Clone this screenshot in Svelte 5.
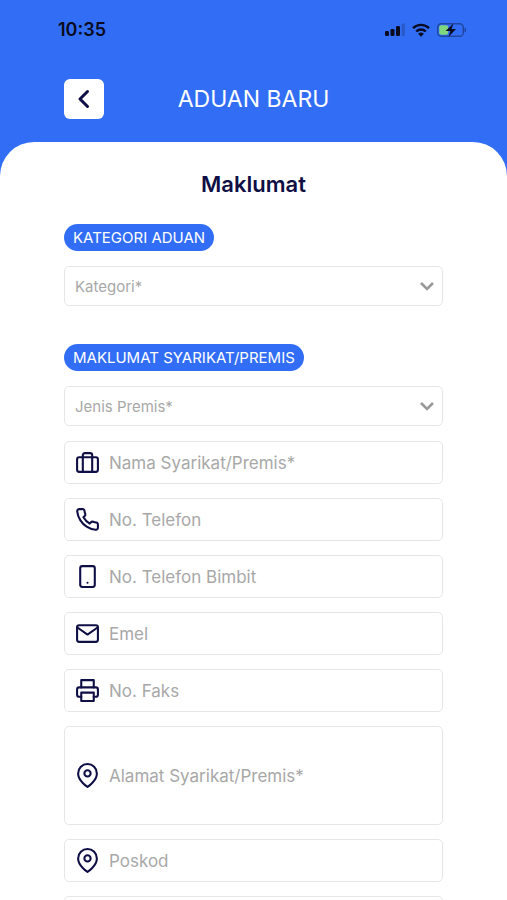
<script lang="ts">
  type Field = {
    id: string;
    icon: keyof typeof icons;
    placeholder: string;
    type?: string;
    multiline?: boolean;
  };

  // 24x24 stroke icons
  const icons = {
    briefcase: ['M4 7h16a2 2 0 0 1 2 2v10a2 2 0 0 1-2 2H4a2 2 0 0 1-2-2V9a2 2 0 0 1 2-2z', 'M16.500 21V5a2 2 0 0 0-2-2h-5a2 2 0 0 0-2 2v16'],
    phone: [
      'M22 16.92v3a2 2 0 0 1-2.18 2 19.79 19.79 0 0 1-8.63-3.07 19.5 19.5 0 0 1-6-6 19.79 19.79 0 0 1-3.07-8.67A2 2 0 0 1 4.11 2h3a2 2 0 0 1 2 1.72 12.84 12.84 0 0 0 .7 2.81 2 2 0 0 1-.45 2.11L8.09 9.91a16 16 0 0 0 6 6l1.27-1.27a2 2 0 0 1 2.11-.45 12.84 12.84 0 0 0 2.81.7A2 2 0 0 1 22 16.92z'
    ],
    mobile: ['M7 2h10a2 2 0 0 1 2 2v16a2 2 0 0 1-2 2H7a2 2 0 0 1-2-2V4a2 2 0 0 1 2-2z', 'M12 18h.01'],
    mail: ['M4 4h16c1.1 0 2 .9 2 2v12c0 1.1-.9 2-2 2H4c-1.1 0-2-.9-2-2V6c0-1.1.9-2 2-2z', 'M22 6l-10 7L2 6'],
    printer: ['M6 9V2h12v7', 'M6 18H4a2 2 0 0 1-2-2v-5a2 2 0 0 1 2-2h16a2 2 0 0 1 2 2v5a2 2 0 0 1-2 2h-2', 'M6 14h12v8H6z'],
    pin: ['M21 10c0 7-9 13-9 13s-9-6-9-13a9 9 0 0 1 18 0z', 'M12 7a3 3 0 1 1 0 6 3 3 0 0 1 0-6z']
  };

  const fields: Field[] = [
    { id: 'nama', icon: 'briefcase', placeholder: 'Nama Syarikat/Premis*' },
    { id: 'telefon', icon: 'phone', placeholder: 'No. Telefon', type: 'tel' },
    { id: 'bimbit', icon: 'mobile', placeholder: 'No. Telefon Bimbit', type: 'tel' },
    { id: 'emel', icon: 'mail', placeholder: 'Emel', type: 'email' },
    { id: 'faks', icon: 'printer', placeholder: 'No. Faks', type: 'tel' },
    { id: 'alamat', icon: 'pin', placeholder: 'Alamat Syarikat/Premis*', multiline: true },
    { id: 'poskod', icon: 'pin', placeholder: 'Poskod' },
    { id: 'lain', icon: 'pin', placeholder: '' }
  ];

  let values: Record<string, string> = $state({});
</script>

{#snippet dropdown(id: string, label: string)}
  <div class="dropdown">
    <select {id} aria-label={label}>
      <option value="">{label}</option>
    </select>
    <svg class="chevron" viewBox="0 0 16 16" aria-hidden="true">
      <path d="M2 5l6 6 6-6" />
    </svg>
  </div>
{/snippet}

<div class="screen">
  <div class="status">
    <span class="clock">10:35</span>
    <div class="indicators">
      <svg width="22" height="14" viewBox="0 0 22 14" aria-hidden="true">
        <rect x="1" y="8" width="4" height="5" rx="1.2" />
        <rect x="6.5" y="6" width="4" height="7" rx="1.2" />
        <rect x="12" y="3" width="4" height="10" rx="1.2" />
        <rect x="17.5" y="0.5" width="3.5" height="12.5" rx="1.2" opacity="0.2" />
      </svg>
      <svg width="20" height="14" viewBox="0 0 20 14" aria-hidden="true">
        <path class="wave" d="M2 5.2a11.4 11.4 0 0 1 16 0" />
        <path class="wave" d="M5.2 8.5a6.9 6.9 0 0 1 9.6 0" />
        <path d="M10 13.8l-2.9-3a4.2 4.2 0 0 1 5.8 0z" />
      </svg>
      <svg width="31" height="16" viewBox="0 0 31 16" aria-hidden="true">
        <rect class="shell" x="1.7" y="1.7" width="25.6" height="12.6" rx="3.6" />
        <path d="M28.6 5.5c2 .8 2 4.2 0 5z" opacity="0.45" />
        <rect class="charge" x="3.2" y="3.2" width="9" height="9.6" rx="2" />
        <path d="M17.5 1.5L9.5 9h4.8l-1.6 5.8L20 7h-4.5z" />
      </svg>
    </div>
  </div>

  <header>
    <button type="button" class="back" aria-label="Kembali">
      <svg viewBox="0 0 24 24" aria-hidden="true"><path d="M15.5 4.5L8 12l7.5 7.5" /></svg>
    </button>
    <h1>ADUAN BARU</h1>
  </header>

  <main>
    <h2>Maklumat</h2>

    <section>
      <h3>KATEGORI ADUAN</h3>
      {@render dropdown('kategori', 'Kategori*')}
    </section>

    <section>
      <h3>MAKLUMAT SYARIKAT/PREMIS</h3>
      {@render dropdown('jenis', 'Jenis Premis*')}

      <div class="fields">
        {#each fields as field (field.id)}
          <label class="field" class:tall={field.multiline} for={field.id}>
            <svg class="icon" viewBox="0 0 24 24" aria-hidden="true">
              {#each icons[field.icon] as d}
                <path {d} />
              {/each}
            </svg>
            {#if field.multiline}
              <textarea
                id={field.id}
                rows="1"
                placeholder={field.placeholder}
                bind:value={values[field.id]}
              ></textarea>
            {:else}
              <input
                id={field.id}
                type={field.type ?? 'text'}
                placeholder={field.placeholder}
                bind:value={values[field.id]}
              />
            {/if}
          </label>
        {/each}
      </div>
    </section>
  </main>
</div>

<style>
  :global(body) {
    margin: 0;
  }

  .screen {
    --blue: #316ef5;
    --navy: #0f0f45;
    --line: #e6e6e6;
    --muted: #a8a8a8;
    display: flex;
    flex-direction: column;
    height: 100vh;
    background: var(--blue);
    color: var(--navy);
    font-family: Inter, "Liberation Sans", sans-serif;
  }
  .screen * { box-sizing: border-box; }

  .status {
    display: flex;
    align-items: center;
    justify-content: space-between;
    flex: none;
    height: 59px;
    padding: 0 40px 0 58px;
    color: #0a0a20;
  }
  .clock {
    font-size: 18px;
    font-weight: 600;
  }
  .indicators {
    display: flex;
    align-items: center;
    gap: 5px;
    fill: #0a0a20;
  }
  .wave {
    fill: none;
    stroke: #0a0a20;
    stroke-width: 2.4;
  }
  .shell {
    fill: none;
    stroke: #0a0a20;
    stroke-width: 1.4;
    opacity: 0.4;
  }
  .charge { fill: #7fd67f; }

  header {
    display: grid;
    grid-template-columns: 40px 1fr 40px;
    align-items: center;
    flex: none;
    height: 83px;
    padding: 0 64px 3px;
  }
  .back {
    display: grid;
    place-items: center;
    width: 40px;
    height: 40px;
    padding: 0;
    border: 0;
    border-radius: 6px;
    background: #fff;
    cursor: pointer;
  }
  .back svg {
    width: 24px;
    height: 24px;
    fill: none;
    stroke: var(--navy);
    stroke-width: 3;
    stroke-linecap: round;
    stroke-linejoin: round;
  }
  h1 {
    margin: 0;
    color: #fff;
    font-size: 23px;
    font-weight: 400;
    text-align: center;
  }

  main {
    flex: 1;
    min-height: 0;
    overflow-y: auto;
    scrollbar-width: none;
    padding: 29px 64px;
    border-radius: 34px 34px 0 0;
    background: #fff;
  }
  h2 {
    margin: 0 0 26px;
    font-size: 22px;
    font-weight: 600;
    line-height: 27px;
    text-align: center;
  }
  section {
    display: flex;
    flex-direction: column;
    gap: 15px;
    margin-bottom: 38px;
  }
  h3 {
    align-self: flex-start;
    margin: 0;
    padding: 0 9px;
    border-radius: 14px;
    background: var(--blue);
    color: #fff;
    font-size: 15px;
    font-weight: 400;
    line-height: 27px;
  }

  .dropdown {
    display: grid;
    align-items: center;
  }
  .dropdown select,
  .chevron {
    grid-area: 1 / 1;
  }
  .dropdown select {
    appearance: none;
    width: 100%;
    height: 40px;
    padding: 0 40px 0 10px;
    border: 1px solid var(--line);
    border-radius: 5px;
    background: #fff;
    color: var(--muted);
    font-family: inherit;
    font-size: 15px;
  }
  .chevron {
    justify-self: end;
    width: 16px;
    height: 16px;
    margin-right: 8px;
    fill: none;
    stroke: #999;
    stroke-width: 2.6;
    pointer-events: none;
  }

  .fields {
    display: flex;
    flex-direction: column;
    gap: 14px;
  }
  .field {
    display: flex;
    align-items: center;
    gap: 9px;
    height: 43px;
    padding: 0 10px;
    border: 1px solid var(--line);
    border-radius: 5px;
  }
  .field.tall { height: 99px; }
  .icon {
    flex: none;
    width: 25px;
    height: 25px;
    fill: none;
    stroke: var(--navy);
    stroke-width: 2;
    stroke-linecap: round;
    stroke-linejoin: round;
  }
  .field input,
  .field textarea {
    flex: 1;
    min-width: 0;
    padding: 0;
    border: 0;
    outline: 0;
    background: none;
    color: var(--navy);
    font-family: inherit;
    font-size: 17px;
    line-height: 22px;
    resize: none;
  }
  .field ::placeholder {
    color: var(--muted);
    opacity: 1;
  }
</style>
